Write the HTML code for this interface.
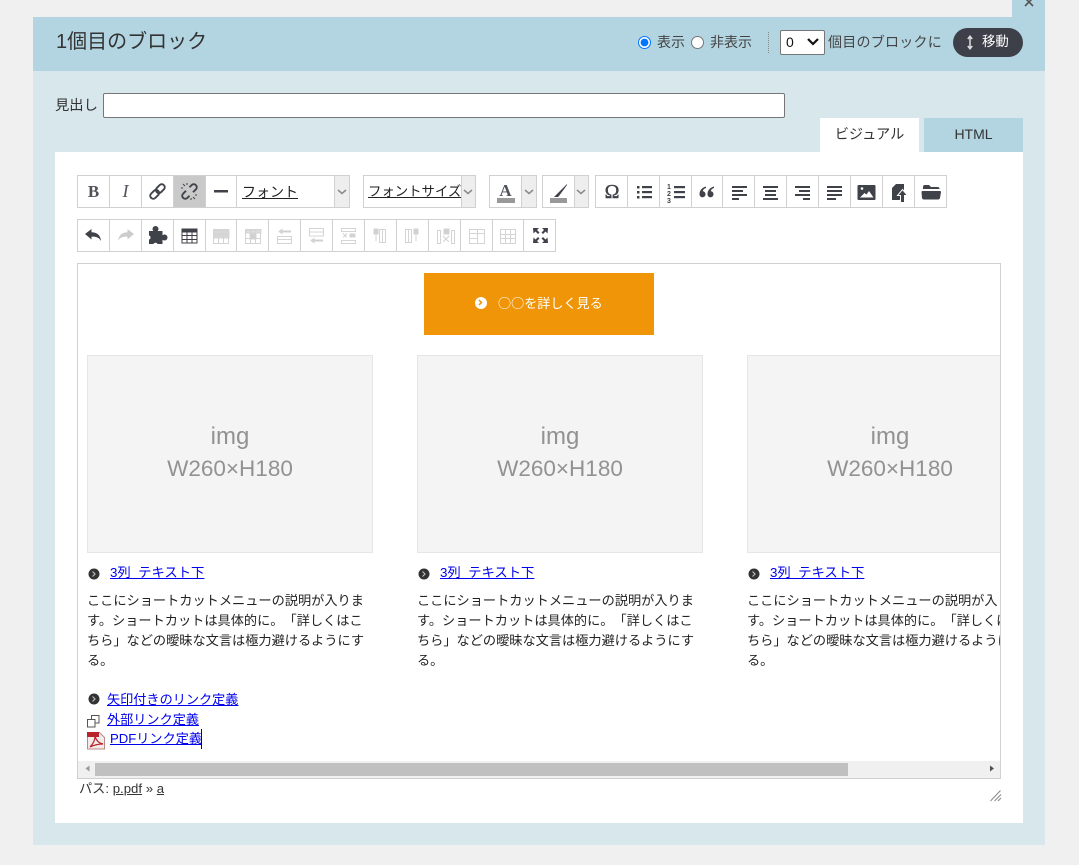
<!DOCTYPE html>
<html lang="ja"><head><meta charset="utf-8"><title>ブロック</title>
<style>
html,body{margin:0;padding:0;width:1079px;height:865px;overflow:hidden;background:#f0f0f0}
body{position:relative;font-family:"Liberation Sans","Noto Sans CJK JP",sans-serif;color:#333;text-spacing-trim:space-all}
.a{position:absolute;white-space:nowrap}
a{color:#00e;text-decoration:underline}
svg{position:absolute;left:0;top:0}
.t{font-size:13.2px;line-height:20px;color:#222}
.l{font-size:13.33px}
.m{font-size:13.15px}
.im{background:#f4f4f4;border:1px solid #e6e6e6;text-align:center;color:#929292;font-size:22.5px;width:284px;height:196px;top:91px}
.im div{position:absolute;left:0;right:0;line-height:30px}
</style></head><body>
<div class="a" style="left:33px;top:17px;width:1012px;height:828px;background:#d8e7ec"></div>
<div class="a" style="left:33px;top:17px;width:1012px;height:54px;background:#b2d5e1"></div>
<div class="a" style="left:1012px;top:0;width:33px;height:17px;background:#b2d5e1"></div>
<div class="a" style="left:56px;top:26px;font-size:20px;line-height:32px;color:#333">1個目のブロック</div>

<input class="a" type="radio" name="r" checked style="left:638px;top:36px;margin:0;width:13px;height:13px">
<div class="a" style="left:657px;top:32px;font-size:14px;line-height:20px;color:#444">表示</div>
<input class="a" type="radio" name="r" style="left:691px;top:36px;margin:0;width:13px;height:13px">
<div class="a" style="left:710px;top:32px;font-size:14px;line-height:20px;color:#444">非表示</div>
<div class="a" style="left:768px;top:32px;height:21px;border-left:1px dotted #888"></div>
<div class="a" style="left:780px;top:30px;width:43px;height:23px;background:#fff;border:1px solid #767676;border-radius:2px;box-sizing:content-box"></div>
<div class="a" style="left:786px;top:32px;font-size:14px;line-height:20px;color:#111">0</div>
<div class="a" style="left:828px;top:32px;font-size:14px;letter-spacing:.25px;line-height:20px;color:#444">個目のブロックに</div>
<div class="a" style="left:953px;top:28px;width:70px;height:29px;border-radius:15px;background:#3d4049"></div>
<div class="a" style="left:982px;top:32px;font-size:13.4px;line-height:20px;color:#fff">移動</div>

<div class="a" style="left:55px;top:96px;font-size:14.3px;line-height:20px;color:#333">見出し</div>
<div class="a" style="left:103px;top:93px;width:680px;height:23px;background:#fff;border:1px solid #767676;border-radius:2px"></div>

<div class="a" style="left:820px;top:118px;width:99px;height:34px;background:#fff;text-align:center;font-size:14.2px;line-height:34px;color:#333">ビジュアル</div>
<div class="a" style="left:924px;top:118px;width:99px;height:34px;background:#b2d5e1;text-align:center;font-size:14px;line-height:33px;color:#333">HTML</div>
<div class="a" style="left:55px;top:152px;width:968px;height:671px;background:#fff"></div>

<!-- editor -->
<div class="a" style="left:77px;top:263px;width:922px;height:514px;border:1px solid #d0d0d0;overflow:hidden;background:#fff">
  <div class="a" style="left:346px;top:9px;width:230px;height:62px;background:#ef9507"></div>
  <div class="a" style="left:420px;top:29px;font-family:'Noto Sans CJK JP',sans-serif;font-size:13.1px;line-height:20px;color:#fff">○○を詳しく見る</div>
  <div class="a" style="left:397px;top:33px;width:12px;height:12px;border-radius:50%;background:#fff"></div>

  <div class="a im" style="left:9px"><div style="top:66px;font-size:24px">img</div><div style="top:98px">W260×H180</div></div>
  <div class="a im" style="left:339px"><div style="top:66px;font-size:24px">img</div><div style="top:98px">W260×H180</div></div>
  <div class="a im" style="left:669px"><div style="top:66px;font-size:24px">img</div><div style="top:98px">W260×H180</div></div>

  <div class="a t l" style="left:32px;top:299px"><a>3列&nbsp; テキスト下</a></div>
  <div class="a t l" style="left:362px;top:299px"><a>3列&nbsp; テキスト下</a></div>
  <div class="a t l" style="left:692px;top:299px"><a>3列&nbsp; テキスト下</a></div>
  <div class="a t" style="left:9px;top:327px">ここにショートカットメニューの説明が入りま<br>す。ショートカットは具体的に。「詳しくはこ<br>ちら」などの曖昧な文言は極力避けるようにす<br>る。</div>
  <div class="a t" style="left:339px;top:327px">ここにショートカットメニューの説明が入りま<br>す。ショートカットは具体的に。「詳しくはこ<br>ちら」などの曖昧な文言は極力避けるようにす<br>る。</div>
  <div class="a t" style="left:669px;top:327px">ここにショートカットメニューの説明が入りま<br>す。ショートカットは具体的に。「詳しくはこ<br>ちら」などの曖昧な文言は極力避けるようにす<br>る。</div>

  <div class="a t m" style="left:29px;top:426px"><a>矢印付きのリンク定義</a></div>
  <div class="a t m" style="left:29px;top:446px"><a>外部リンク定義</a></div>
  <div class="a t m" style="left:32px;top:465px"><a>PDFリンク定義</a></div>
  <div class="a" style="left:123px;top:465px;width:1px;height:20px;background:#00a"></div>

  <div class="a" style="left:0;top:497px;width:922px;height:17px;background:#f0f0f0"></div>
  <div class="a" style="left:17px;top:499px;width:753px;height:13px;background:#c0c0c0"></div>
</div>

<div class="a" style="left:79px;top:780px;font-size:13.2px;line-height:18px;color:#333">パス: <span style="text-decoration:underline">p.pdf</span> » <span style="text-decoration:underline">a</span></div>

<svg width="1079" height="865" viewBox="0 0 1079 865">
<!-- close -->
<path d="M1025 -2L1033 6M1033 -2L1025 6" stroke="#555" stroke-width="1.6" fill="none"/>
<!-- select arrow -->
<path d="M808 39l5 5 5-5" stroke="#111" stroke-width="2.2" fill="none"/>
<!-- move arrow -->
<path d="M970 37v11M967.800 39l2.200-2.800 2.200 2.800M967.800 46l2.200 2.800 2.200-2.800" stroke="#ddd" stroke-width="1.500" fill="none"/>

<!-- row 1 frames -->
<g fill="#fff" stroke="#d0d0d0" stroke-width="1" shape-rendering="crispEdges">
<rect x="77.500" y="175.500" width="272" height="32"/>
<rect x="363.500" y="175.500" width="112" height="32"/>
<rect x="489.500" y="175.500" width="47" height="32"/>
<rect x="542.500" y="175.500" width="46" height="32"/>
<rect x="595.500" y="175.500" width="351" height="32"/>
<rect x="77.500" y="219.500" width="478" height="32"/>
</g>
<g shape-rendering="crispEdges">
<rect x="173" y="176" width="32" height="31" fill="#c9c9c9"/>
<rect x="334" y="176" width="15" height="31" fill="#eee"/>
<rect x="461" y="176" width="14" height="31" fill="#eee"/>
<rect x="521" y="176" width="15" height="31" fill="#eee"/>
<rect x="574" y="176" width="14" height="31" fill="#eee"/>
</g>
<path shape-rendering="crispEdges" stroke="#d0d0d0" fill="none" d="M109.500 176v31M141.500 176v31M173.500 176v31M205.500 176v31M236.500 176v31M334.500 176v31M461.500 176v31M521.500 176v31M574.500 176v31M627.500 176v31M659.500 176v31M691.500 176v31M722.500 176v31M754.500 176v31M786.500 176v31M818.500 176v31M850.500 176v31M882.500 176v31M914.500 176v31
M109.500 220v31M141.500 220v31M173.500 220v31M205.500 220v31M236.500 220v31M268.500 220v31M300.500 220v31M332.500 220v31M364.500 220v31M396.500 220v31M428.500 220v31M460.500 220v31M492.500 220v31M523.500 220v31"/>

<!-- B I -->
<text x="93.500" y="197" text-anchor="middle" font-family="Liberation Serif" font-weight="700" font-size="17" fill="#50525a">B</text>
<text x="125.500" y="197" text-anchor="middle" font-family="Liberation Serif" font-style="italic" font-size="18" fill="#50525a">I</text>
<!-- link -->
<g fill="none" stroke="#404249" stroke-width="1.900">
<g transform="translate(157.500 191.500) rotate(-45)"><rect x="-9" y="-3" width="10" height="6" rx="3"/><rect x="-1" y="-3" width="10" height="6" rx="3"/></g>
<g transform="translate(189.500 191.500) rotate(-45)"><path d="M-2 -3h-4a3 3 0 0 0 0 6h3M2 3h4a3 3 0 0 0 0-6h-3"/></g>
<path stroke-width="1" d="M183 184l2 2M187 183v2M195 199l-2-2M197 195h-2M181 188h2M191 200v-2"/>
</g>
<rect x="214" y="190" width="14" height="2.500" fill="#404249"/>
<!-- dropdown chevrons -->
<g fill="none" stroke="#8a8a8a" stroke-width="1.500">
<path d="M338 190l4 3.500 4-3.500M464 190l4 3.500 4-3.500M525 190l4 3.500 4-3.500M577 190l4 3.500 4-3.500"/>
</g>
<!-- text color -->
<text x="505.500" y="196" text-anchor="middle" font-family="Liberation Serif" font-weight="700" font-size="17" fill="#50525a">A</text>
<rect x="497" y="198" width="18" height="5" fill="#999"/>
<!-- highlight -->
<path d="M567 184l-8 8-5 5h4l1-1 8-11z" fill="#404249"/>
<rect x="550" y="198" width="17" height="5" fill="#999"/>
<!-- omega -->
<text x="612" y="198" text-anchor="middle" font-family="Liberation Serif" font-size="20" fill="#404249" stroke="#404249" stroke-width=".4">Ω</text>
<!-- ul -->
<g fill="#404249">
<rect x="637" y="186" width="2.500" height="2.500"/><rect x="637" y="191" width="2.500" height="2.500"/><rect x="637" y="196" width="2.500" height="2.500"/>
<rect x="642" y="186" width="10" height="2.200"/><rect x="642" y="191" width="10" height="2.200"/><rect x="642" y="196" width="10" height="2.200"/>
<!-- ol -->
<rect x="674" y="186" width="11" height="2.200"/><rect x="674" y="191" width="11" height="2.200"/><rect x="674" y="196" width="11" height="2.200"/>
</g>
<g font-family="Liberation Sans" font-weight="700" font-size="7" fill="#404249" text-anchor="middle">
<text x="669" y="189">1</text><text x="669" y="196">2</text><text x="669" y="203">3</text></g>
<!-- quote -->
<path fill="#404249" d="M706 186.500c-4 1-6.500 4-6.500 7.500 0 2 1.200 3.300 3 3.300s3-1.300 3-3-1.200-3-2.800-3c.3-1.500 1.500-2.800 3.300-3.300zM714 186.500c-4 1-6.500 4-6.500 7.500 0 2 1.200 3.300 3 3.300s3-1.300 3-3-1.200-3-2.800-3c.3-1.500 1.500-2.800 3.300-3.300z"/>
<!-- aligns -->
<g fill="#404249">
<rect x="732" y="186" width="15" height="2"/><rect x="732" y="190" width="11" height="2"/><rect x="732" y="194" width="15" height="2"/><rect x="732" y="198" width="7" height="2"/>
<rect x="763" y="186" width="15" height="2"/><rect x="765" y="190" width="11" height="2"/><rect x="765" y="194" width="11" height="2"/><rect x="763" y="198" width="15" height="2"/>
<rect x="795" y="186" width="15" height="2"/><rect x="799" y="190" width="11" height="2"/><rect x="795" y="194" width="15" height="2"/><rect x="803" y="198" width="7" height="2"/>
<rect x="827" y="186" width="15" height="2"/><rect x="827" y="190" width="15" height="2"/><rect x="827" y="194" width="15" height="2"/><rect x="827" y="198" width="9" height="2"/>
</g>
<!-- image -->
<rect x="857.500" y="185" width="18" height="15" rx="1" fill="#404249"/>
<path d="M860 197.500l4.500-4.500 2 1.500 2.500-3.500 4.500 6.500z" fill="#fff"/><circle cx="862" cy="188.500" r="1.300" fill="#fff"/>
<!-- upload -->
<path d="M896 184h8v16h-12v-12z" fill="#404249"/>
<path d="M902.500 189.500l5 6h-3v7h-4v-7h-3z" fill="#404249" stroke="#fff" stroke-width="1"/>
<!-- folder -->
<path d="M923 189v-2a2 2 0 0 1 2-2h4l2 2h7a2 2 0 0 1 1.500 2z" fill="#404249"/>
<path d="M922.500 191h17.500a1 1 0 0 1 1 1l-1 6a2 2 0 0 1-2 1.500h-14a2 2 0 0 1-2-1.500l-.5-6a1 1 0 0 1 1-1z" fill="#404249"/>

<!-- row 2 -->
<path fill="#404249" d="M85 234l6.500-5v3.200c5 0 9 2.500 9.500 8.800-2-3.500-5-4.500-9.500-4.300v2.800z"/>
<path fill="#ccc" d="M134 234l-6.500-5v3.200c-5 0-8.500 2.500-9.500 8.800 2-3.500 5-4.500 9.500-4.300v2.800z"/>
<!-- puzzle -->
<g fill="#404249"><rect x="149" y="231" width="13.500" height="13"/><circle cx="155.500" cy="229" r="3"/><circle cx="164.500" cy="237.500" r="3"/></g>
<circle cx="155.500" cy="245" r="2.300" fill="#fff"/><circle cx="148.500" cy="237.500" r="2" fill="#fff"/>
<!-- table -->
<g shape-rendering="crispEdges">
<rect x="182" y="229" width="15" height="14" fill="none" stroke="#404249"/><rect x="182" y="229" width="15" height="3.500" fill="#404249"/>
<path stroke="#404249" d="M187 232v11M192 232v11M182 235.500h15M182 239.500h15" fill="none"/>
</g>
<g stroke="#d4d4d4" fill="none" shape-rendering="crispEdges">
<rect x="213.500" y="229.500" width="15" height="14"/><rect x="214" y="230" width="15" height="4" fill="#d8d8d8"/><rect x="214" y="235" width="15" height="3" fill="#d8d8d8"/><path d="M218.500 230v13M223.500 230v13"/>
<rect x="245.500" y="229.500" width="15" height="14"/><rect x="246" y="230" width="15" height="3" fill="#dedede"/><rect x="250" y="234" width="6" height="5" fill="#d0d0d0"/><path d="M250.500 230v13M255.500 230v13M246 238.500h15"/>
<rect x="277.500" y="236.500" width="14" height="3"/><rect x="277.500" y="239.500" width="14" height="4"/><path d="M282 231.500h9" stroke="#d0d0d0" stroke-width="2"/><path d="M279 231.500l3-2v4z" fill="#d0d0d0"/>
<rect x="309.500" y="228.500" width="14" height="3.500"/><rect x="309.500" y="232" width="14" height="4"/><path d="M314 240.500h9" stroke="#d0d0d0" stroke-width="2"/><path d="M311 240.500l3-2v4z" fill="#d0d0d0"/>
<rect x="341.500" y="228.500" width="14" height="3"/><rect x="341.500" y="240.500" width="14" height="3"/><rect x="350" y="234" width="5" height="3" fill="#d0d0d0"/><path d="M343 233.500l4 4M347 233.500l-4 4"/>
<rect x="379.500" y="229.500" width="3" height="13"/><rect x="382.500" y="229.500" width="3" height="13"/><rect x="374" y="229" width="4" height="5" fill="#d0d0d0"/><path d="M376 234v7"/>
<rect x="405.500" y="229.500" width="3" height="13"/><rect x="408.500" y="229.500" width="3" height="13"/><rect x="414" y="229" width="4" height="5" fill="#d0d0d0"/><path d="M416 234v7"/>
<rect x="437.500" y="230.500" width="3" height="13"/><rect x="451.500" y="230.500" width="3" height="13"/><rect x="444" y="229" width="5" height="5" fill="#d0d0d0"/><path d="M443 236l6 6M449 236l-6 6"/>
<rect x="469.500" y="229.500" width="15" height="14"/><path d="M469 233.500h15M477.500 230v13M470 238.500h7"/>
<rect x="500.500" y="229.500" width="15" height="14"/><path d="M505.500 230v13M510.500 230v13M501 234.500h14M501 238.500h14"/>
</g>
<!-- fullscreen -->
<g fill="#404249">
<path d="M533 228h6l-2 2 2.500 2.500-1.500 1.500-2.500-2.500-2 2zM548 228h-6l2 2-2.500 2.500 1.500 1.500 2.500-2.500 2 2zM533 243h6l-2-2 2.500-2.500-1.500-1.500-2.500 2.500-2-2zM548 243h-6l2-2-2.500-2.500 1.500-1.500 2.500 2.500 2-2z"/>
</g>

<!-- orange button chevron -->
<path d="M479 300l2.500 2.500-2.500 2.500" fill="none" stroke="#ef9507" stroke-width="1.500"/>

<!-- bullets -->
<g>
<circle cx="94" cy="574" r="5.500" fill="#333"/><path d="M92.500 571.500l2.500 2.500-2.500 2.500" fill="none" stroke="#bbb" stroke-width="1.200"/>
<circle cx="424" cy="574" r="5.500" fill="#333"/><path d="M422.500 571.500l2.500 2.500-2.500 2.500" fill="none" stroke="#bbb" stroke-width="1.200"/>
<circle cx="754" cy="574" r="5.500" fill="#333"/><path d="M752.500 571.500l2.500 2.500-2.500 2.500" fill="none" stroke="#bbb" stroke-width="1.200"/>
<circle cx="94" cy="699" r="5.500" fill="#333"/><path d="M92.500 696.500l2.500 2.500-2.500 2.500" fill="none" stroke="#bbb" stroke-width="1.200"/>
</g>
<!-- external -->
<g fill="#fff" stroke="#555" stroke-width="1" shape-rendering="crispEdges">
<rect x="91.500" y="715.500" width="7.500" height="7.500"/><rect x="87.500" y="719.500" width="7.500" height="7.500"/>
</g>
<!-- pdf -->
<path d="M87.500 732.500h12l5 5v11.500h-17z" fill="#f3eaea" stroke="#b98888"/>
<rect x="87" y="732" width="12" height="5" fill="#b5252a"/>
<path d="M90 747c3-3 5-7 5-11 1 4 3 7 8 8-4 0-9 1-13 3z" fill="none" stroke="#b5252a" stroke-width="1.200"/>

<!-- scrollbar arrows -->
<path d="M89.500 765.500v6l-4-3z" fill="#999"/>
<path d="M990 765.500v6l4-3z" fill="#505050"/>
<!-- resize -->
<path d="M990.500 801l10-10.500M994.500 801l6.500-6.500M998 801l3-3" stroke="#888" stroke-width="1" fill="none"/>
</svg>

<!-- toolbar selects text -->
<div class="a" style="left:242px;top:182px;font-size:14px;line-height:20px;color:#222;text-decoration:underline">フォント</div>
<div class="a" style="left:368px;top:182px;font-size:13.4px;line-height:20px;width:93px;overflow:hidden;color:#222;text-decoration:underline">フォントサイズ</div>
</body></html>
